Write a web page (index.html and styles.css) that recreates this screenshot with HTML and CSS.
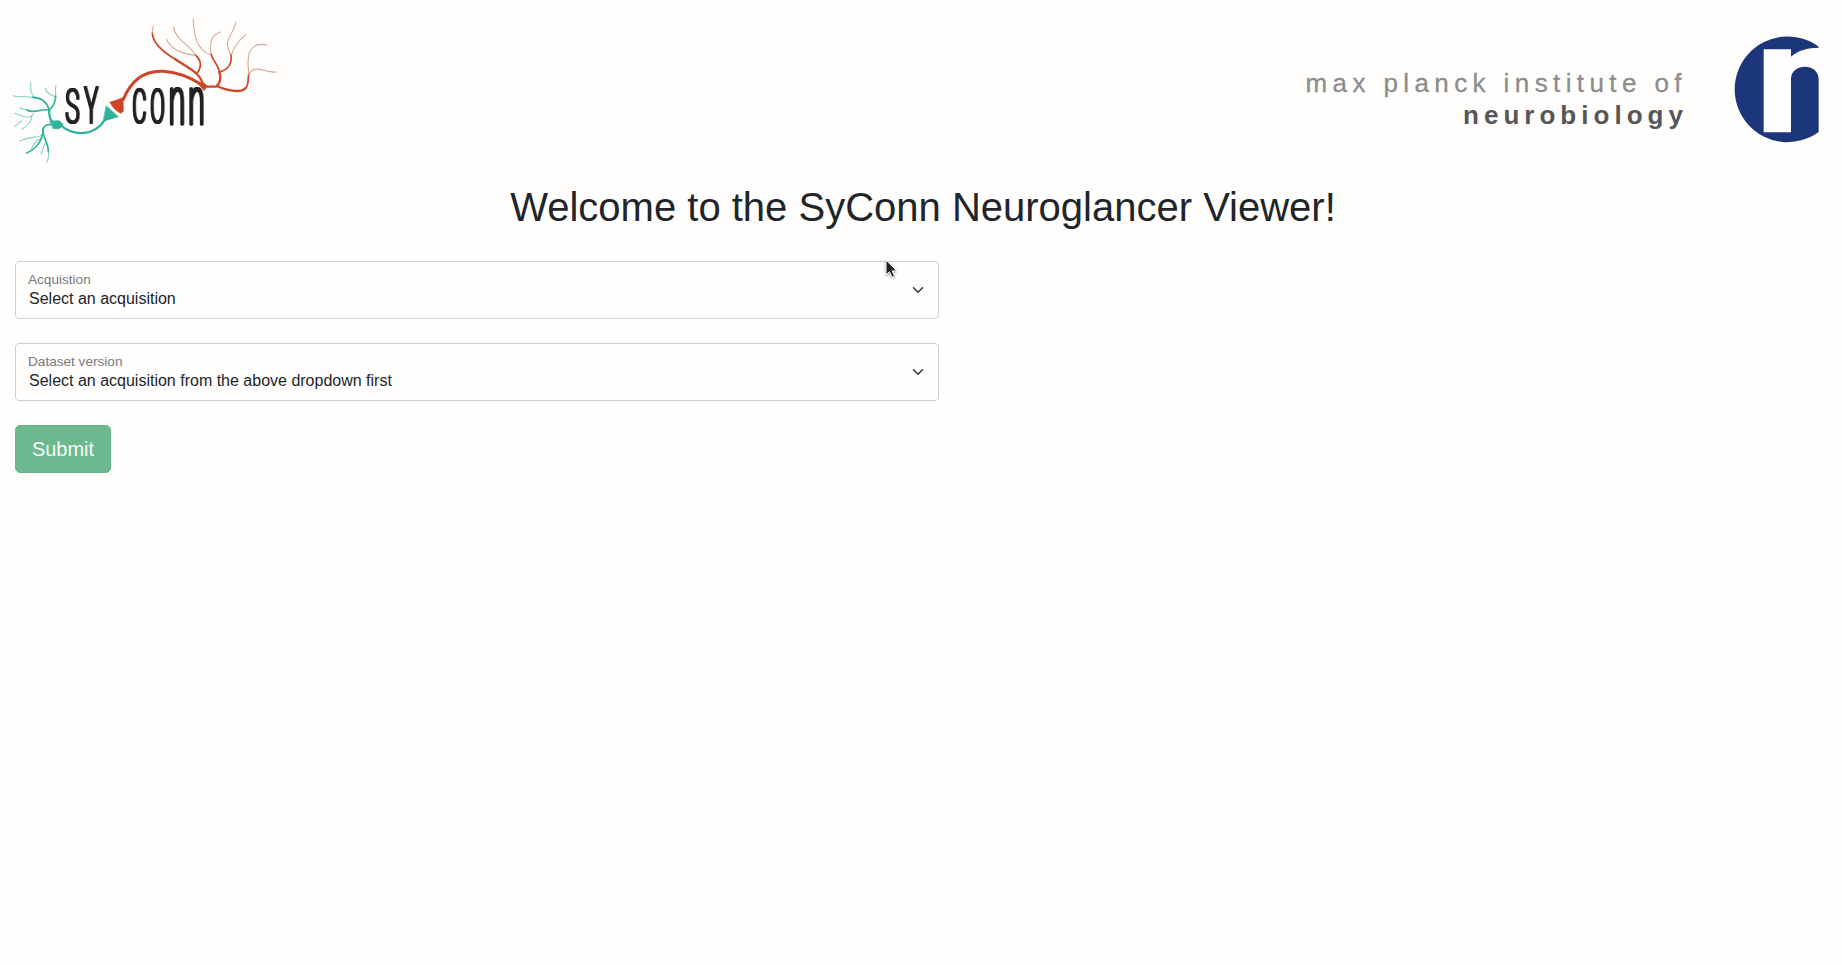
FILE: index.html
```html
<!DOCTYPE html>
<html lang="en">
<head>
<meta charset="utf-8">
<title>SyConn Neuroglancer Viewer</title>
<link rel="stylesheet" href="styles.css">
</head>
<body>
<header class="header">
  <svg class="syconn" viewBox="0 0 870 510" role="img" aria-label="SyConn">
    <g class="green">
      <path class="w7" d="M182 376C222 409 282 410 316 358"/>
      <path class="w7" d="M160 370C148 360 147 345 147 328"/>
      <path class="w5" d="M147 328C138 300 120 292 98 292M147 330C160 320 167 310 167 288M130 390C126 425 110 446 80 459M129 386C126 410 145 425 145 455M145 330C120 325 105 343 80 330M152 374C138 372 130 380 128 392"/>
      <path class="w3" d="M82 331Q70 328 60 323M100 341C88 360 70 350 45 340M96 346C94 372 76 378 66 388M98 292C78 289 60 292 40 287M105 292C85 277 95 265 92 248M167 290C168 274 164 268 168 256M166 290C152 285 140 280 136 264M130 404C110 416 90 408 60 423M127 415C108 420 100 432 94 448M145 452C148 468 145 478 140 487M138 425C130 440 127 450 123 462M66 362L44 380"/>
      <path class="fill" d="M150 363L178 362L190 374L178 386L160 386ZM319 318L355 350L310 364Z"/>
    </g>
    <g class="red">
      <path class="w9" d="M370 298C400 225 450 212 490 214C535 216 570 232 608 256"/>
      <path class="w7" d="M610 258C603 218 565 205 526 178M612 260H648C665 248 662 229 658 215M650 258C690 275 725 278 737 264"/>
      <path class="w5" d="M526 178C486 154 459 130 457 100M592 218C607 198 602 178 587 166M658 216C656 196 638 182 634 163M658 216C685 210 696 190 693 165M737 264C747 253 743 240 746 225"/>
      <path class="w3" d="M457 100C456 90 458 84 461 78M587 166C568 132 526 120 520 80M587 166C550 163 515 150 499 118M634 166C586 148 582 100 579 58M634 165C625 128 636 103 662 96M694 166C673 134 686 113 693 102C703 86 706 77 707 67M694 165C700 145 717 121 738 104M746 230C748 203 737 180 751 152C760 135 780 130 800 135M746 226C754 204 773 205 790 211C806 216 818 217 829 216"/>
      <path class="fill" d="M330 307Q350 300 369 293L370 334L362 340Q342 331 330 307ZM594 250L612 249L622 258L612 272L602 260Z"/>
    </g>
    <g class="word">
      <text transform="translate(218 368) scale(.58 1.22)">S</text>
      <text transform="translate(274.5 370) scale(.56 1.24)">Y</text>
      <text transform="translate(419 368) scale(.53 1.22)">C</text>
      <text transform="translate(473 368) scale(.52 1.22)">O</text>
      <text transform="translate(531 371) scale(.74 1.66)">n</text>
      <text transform="translate(590 371) scale(.74 1.66)">n</text>
    </g>
  </svg>
  <svg class="institute" viewBox="1290 0 552 170" role="img" aria-label="max planck institute of neurobiology">
    <text class="inst" x="1305.5" y="91.5" textLength="376">max planck institute of</text>
    <text class="inst neuro" x="1463" y="124" textLength="220">neurobiology</text>
    <g transform="translate(1700 20) scale(.33333)">
      <path class="blue" d="M356 80A158.5 158.5 0 1 0 356 336V178C356 128 273 128 273 178V337H191V88H273V110C295 91 322 83 356 83Z"/>
    </g>
  </svg>
</header>
<main class="main">
  <h1 class="title">Welcome to the SyConn Neuroglancer Viewer!</h1>
  <form class="form">
    <div class="field">
      <div><div class="label">Acquistion</div><div class="value">Select an acquisition</div></div>
      <svg class="chevron" viewBox="0 0 16 16"><path d="m2 5 6 6 6-6"/></svg>
    </div>
    <div class="field">
      <div><div class="label">Dataset version</div><div class="value">Select an acquisition from the above dropdown first</div></div>
      <svg class="chevron" viewBox="0 0 16 16"><path d="m2 5 6 6 6-6"/></svg>
    </div>
    <button class="submit" type="button">Submit</button>
  </form>
</main>
<svg class="cursor" viewBox="0 0 14 20"><path d="M1 1V16L4.5 12.8L7 18.3L9.6 17.1L7.2 11.9H11.8Z"/></svg>
</body>
</html>
```
FILE: styles.css
```css
* { box-sizing: border-box; }
body {
  margin: 0;
  background: #fffefd;
  color: #212529;
  font-family: "Liberation Sans", Arial, sans-serif;
  font-size: 16px;
}
.header { display: flex; justify-content: space-between; height: 170px; }
.syconn { width: 290px; height: 170px; }
.institute { width: 552px; height: 170px; }
.green path, .red path { fill: none; stroke-linecap: round; }
.green { stroke: #2fb39a; }
.red { stroke: #cf4528; }
.green .fill { fill: #2fb39a; stroke-width: 2; }
.red .fill { fill: #cf4528; stroke-width: 2; }
.w9 { stroke-width: 9; }
.w7 { stroke-width: 7; }
.w5 { stroke-width: 5; }
.w3 { stroke-width: 3.2; opacity: .6; }
.red .w3 { stroke: #bd6a45; }
.word { filter: drop-shadow(2.8px 0 0 #222) drop-shadow(-2.8px 0 0 #222); }
.word text {
  font: 100 120px Roboto, sans-serif;
  text-anchor: middle;
  fill: #222;
  stroke: #222;
  stroke-width: 5px;
  stroke-linejoin: round;
}
.inst { font-size: 26px; fill: #8c8c8c; stroke: #8c8c8c; stroke-width: .3px; }
.neuro { font-weight: 700; fill: #555657; stroke: none; }
.blue { fill: #1b3679; }
.main { padding: 13px 15px 0; }
.title { margin: 0 0 30px; padding-left: 4px; font-size: 40px; font-weight: 400; line-height: 48px; text-align: center; }
.form { display: flex; flex-direction: column; align-items: flex-start; gap: 24px; }
.field {
  display: flex;
  justify-content: space-between;
  align-items: center;
  width: 924px;
  height: 58px;
  padding: 0 12px;
  border: 1px solid #cbcfd8;
  border-radius: 4px;
}
.label { font-size: 13.6px; line-height: 18px; color: #77797b; }
.value { padding: 0 0 2px 1px; line-height: 19px; }
.chevron { width: 16px; height: 12px; fill: none; stroke: #343a40; stroke-width: 2.1; stroke-linecap: round; stroke-linejoin: round; }
.submit {
  width: 96px;
  height: 48px;
  padding: 0;
  border: 1px solid #6cb68f;
  border-radius: 5px;
  background: #6cb98f;
  color: #f6fbf8;
  font: 20px "Liberation Sans", Arial, sans-serif;
}
.cursor {
  position: absolute;
  left: 885px;
  top: 259px;
  width: 14px;
  height: 20px;
  overflow: visible;
  fill: #222;
  stroke: #fff;
  stroke-width: 1;
  filter: drop-shadow(0 1px 1px #0006);
}
```
